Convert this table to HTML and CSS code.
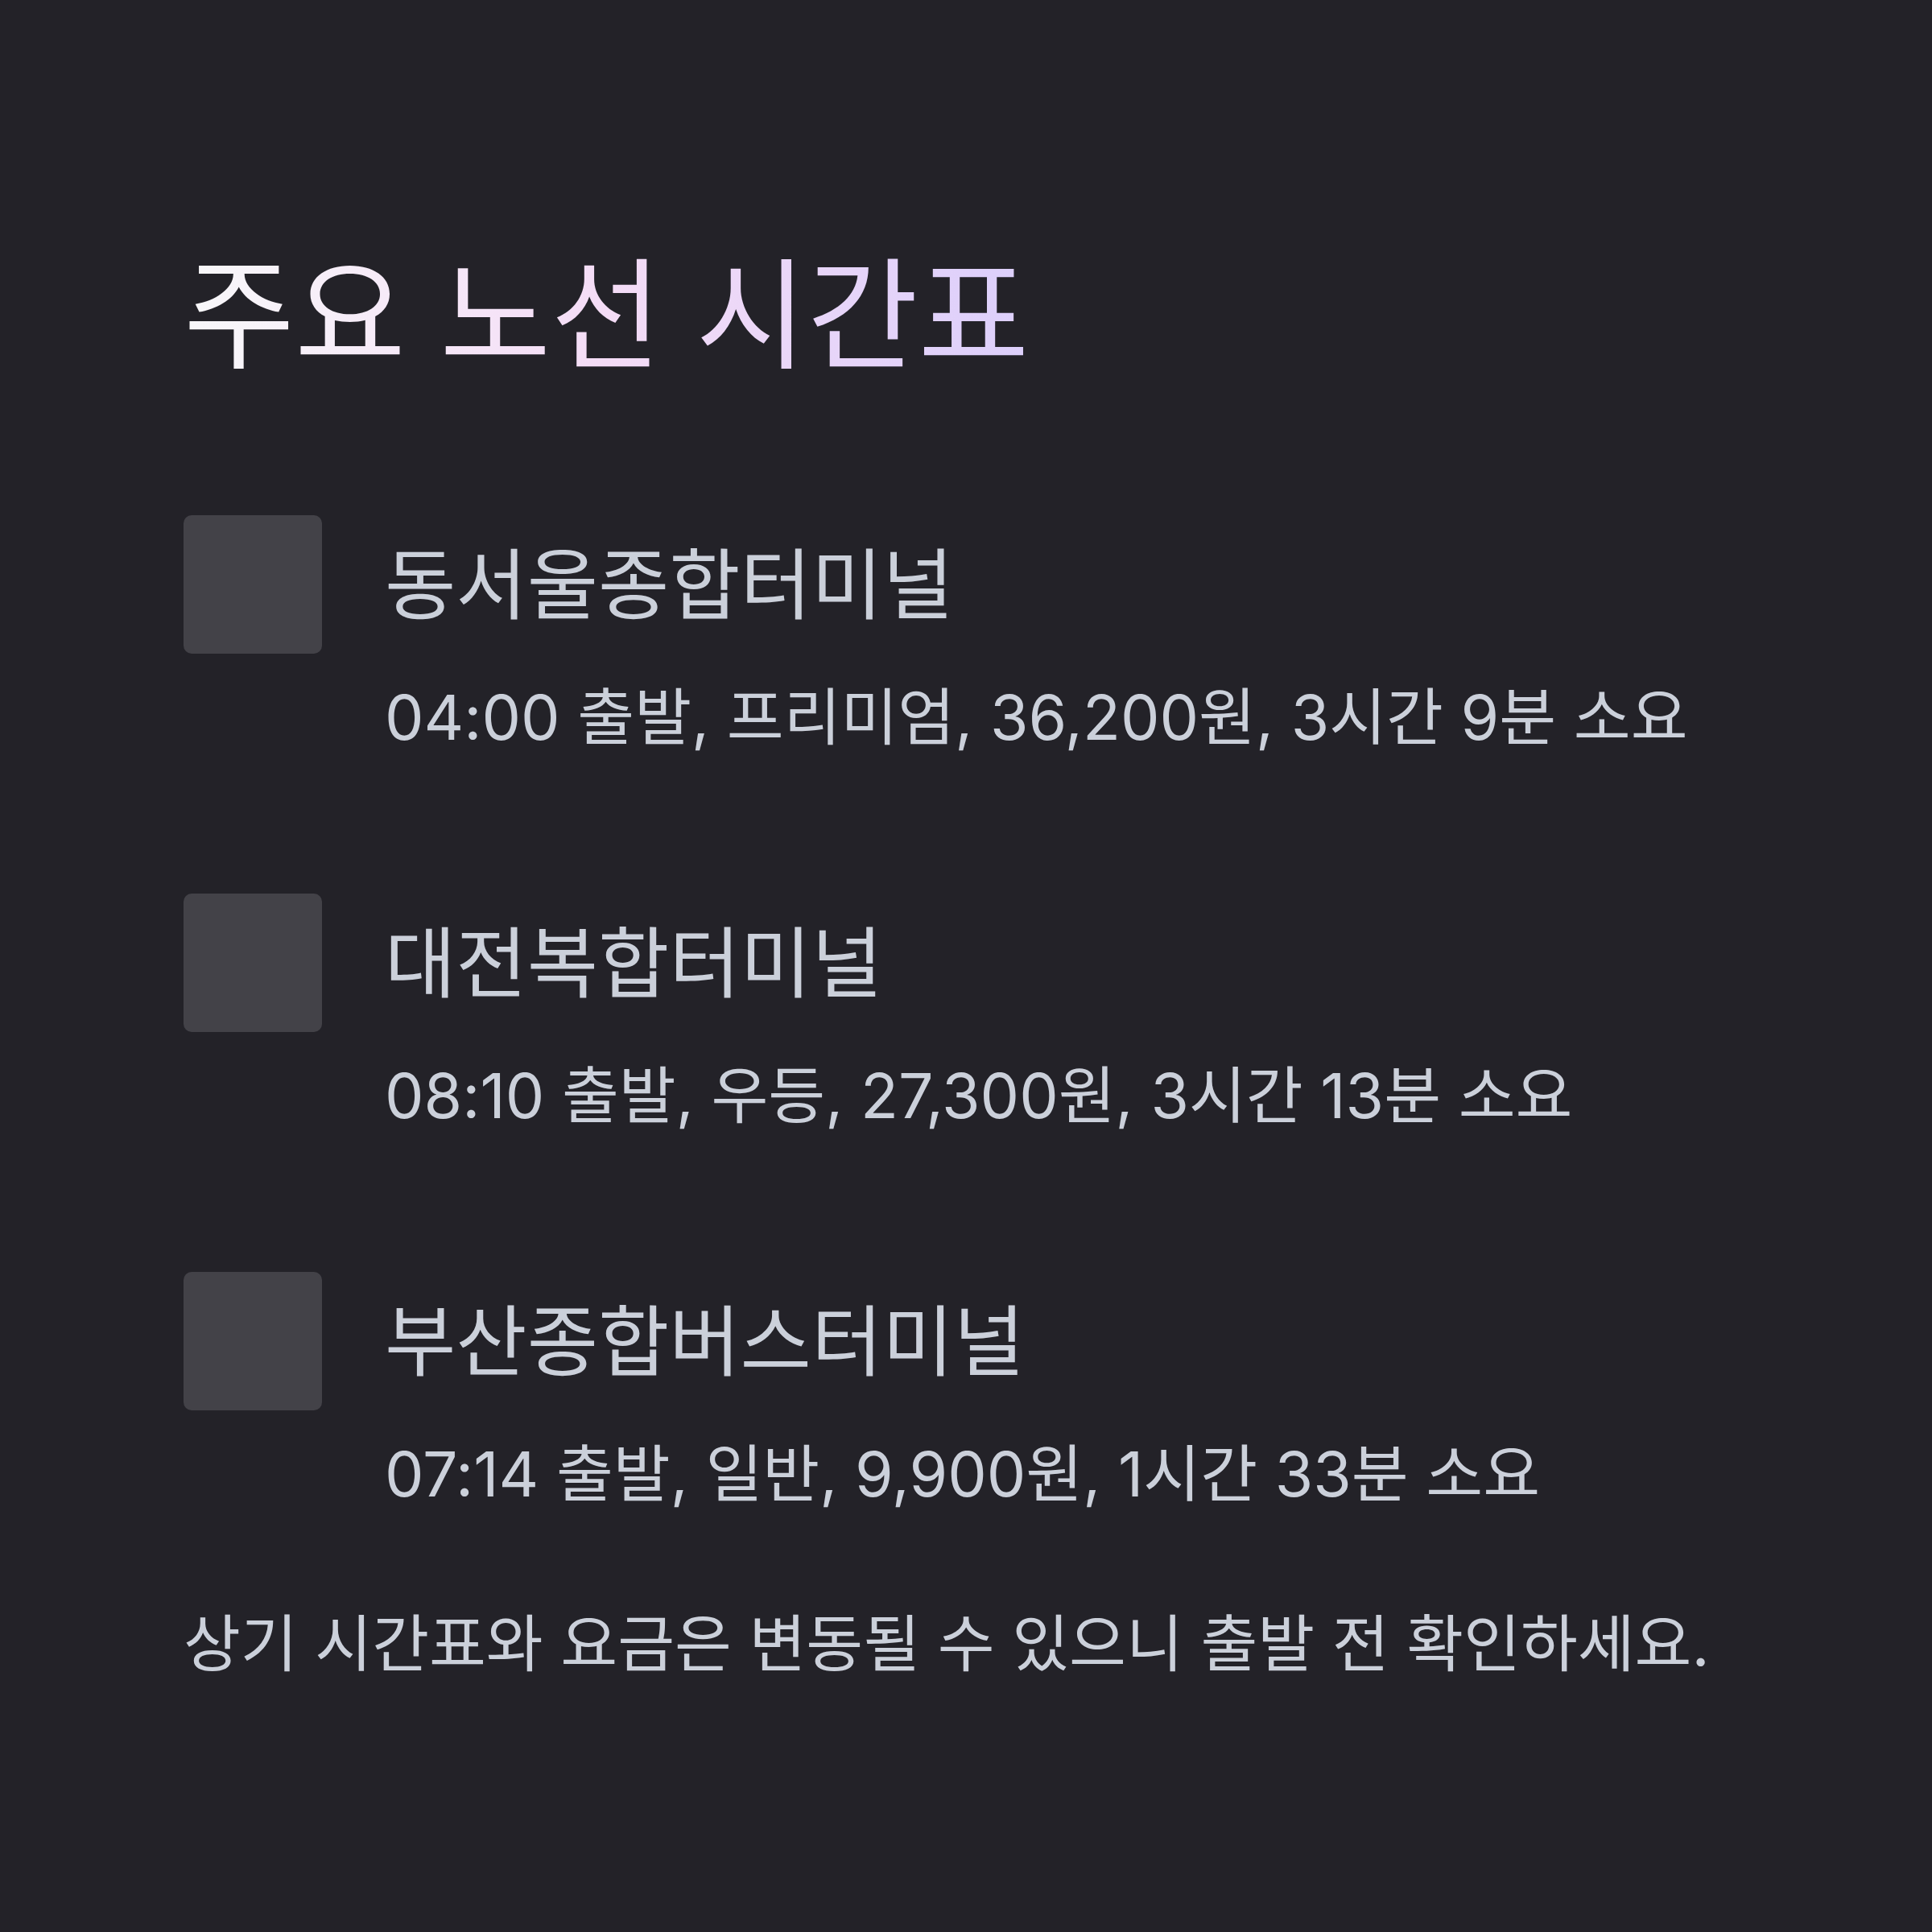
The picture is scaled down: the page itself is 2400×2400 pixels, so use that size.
FILE: index.html
```html
<!DOCTYPE html>
<html lang="ko">
<head>
<meta charset="utf-8">
<title>주요 노선 시간표</title>
<link rel="stylesheet" href="styles.css">
</head>
<body>
<main class="page">
  <h1 class="title">주요 노선 시간표</h1>
  <ul class="routes">
    <li class="route">
      <div class="thumb"></div>
      <div class="info">
        <h2 class="name">동서울종합터미널</h2>
        <p class="detail">04:00 출발, 프리미엄, 36,200원, 3시간 9분 소요</p>
      </div>
    </li>
    <li class="route">
      <div class="thumb"></div>
      <div class="info">
        <h2 class="name">대전복합터미널</h2>
        <p class="detail">08:10 출발, 우등, 27,300원, 3시간 13분 소요</p>
      </div>
    </li>
    <li class="route">
      <div class="thumb"></div>
      <div class="info">
        <h2 class="name">부산종합버스터미널</h2>
        <p class="detail">07:14 출발, 일반, 9,900원, 1시간 33분 소요</p>
      </div>
    </li>
  </ul>
  <p class="note">상기 시간표와 요금은 변동될 수 있으니 출발 전 확인하세요.</p>
</main>
</body>
</html>
```

FILE: styles.css
```css
html, body {
  margin: 0;
  padding: 0;
  background: #232228;
}

body {
  font-family: "Inter", "Noto Sans CJK KR", sans-serif;
  color: #cbd0da;
}

.page {
  padding: 317px 228px 0 228px;
}

.title {
  display: inline-block;
  margin: 0;
  font-size: 150px;
  font-weight: 400;
  line-height: 1;
  background: linear-gradient(90deg, #f8f8fa 0%, #f4dcf6 50%, #dccffb 100%);
  -webkit-background-clip: text;
  background-clip: text;
  color: transparent;
}

.routes {
  list-style: none;
  margin: 173px 0 0 0;
  padding: 0;
  display: flex;
  flex-direction: column;
  gap: 180px;
}

.route {
  display: flex;
  align-items: flex-start;
  gap: 78px;
}

.thumb {
  flex: none;
  width: 172px;
  height: 172px;
  border-radius: 10px;
  background: #434248;
}

.info {
  padding-top: 38px;
}

.name {
  margin: 0;
  font-size: 96px;
  font-weight: 400;
  line-height: 1;
}

.detail {
  margin: 79px 0 0 0;
  font-size: 77px;
  line-height: 1;
}

.note {
  margin: 134px 0 0 0;
  font-size: 77px;
  line-height: 1;
}
```
